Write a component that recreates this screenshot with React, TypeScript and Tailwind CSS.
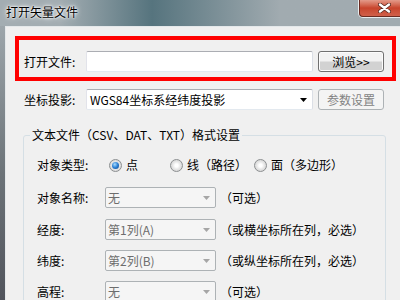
import React from 'react'

function Radio({ checked, label }: { checked?: boolean; label: string }) {
  return (
    <div className="flex items-center gap-[4px]">
      <span className="flex h-[13px] w-[13px] items-center justify-center rounded-full border border-[#8c8f91] bg-radial from-white from-20% via-[#e6e6e6] to-[#c9c9c9]">
        {checked && <span className="h-[7px] w-[7px] rounded-full bg-radial-[at_40%_35%] from-[#a8dcff] via-[#2a7fd4] to-[#0c3f7e]" />}
      </span>
      <span>{label}</span>
    </div>
  )
}

function Arrow({ color }: { color: string }) {
  return (
    <svg width="7" height="4" viewBox="0 0 7 4">
      <path d="M0 0h7L3.5 4z" fill={color} />
    </svg>
  )
}

function DisabledCombo({ value }: { value: string }) {
  return (
    <div className="flex h-[21px] w-[111px] items-center rounded-[2px] border border-[#adb2b5] bg-[#f5f5f5]">
      <span className="flex-1 pl-[2px] text-[#6d6d6d]">{value}</span>
      <span className="flex w-[17px] justify-center">
        <Arrow color="#a6a6a6" />
      </span>
    </div>
  )
}

function ComboRow({ label, value, hint }: { label: string; value: string; hint: string }) {
  return (
    <div className="flex h-[21px] items-center">
      <span className="w-[68px]">{label}</span>
      <DisabledCombo value={value} />
      <span className="ml-[4px]">{hint}</span>
    </div>
  )
}

export default function App() {
  return (
    <div className="flex h-[300px] w-[400px] flex-col overflow-hidden bg-[#8c989e] font-['Microsoft_YaHei','Noto_Sans_CJK_SC',sans-serif] text-[12px] leading-[16px] text-black">
      {/* aero title bar */}
      <div className="flex h-[26px] shrink-0 justify-between bg-linear-to-r from-[#a3adb2] from-15% via-[#56747e] via-38% to-[#a1abb0] to-70%">
        <div className="pl-[6px] pt-[4px] text-[12px] [text-shadow:0_0_6px_#ffffff,0_0_3px_#ffffff,0_0_2px_#ffffff]">
          打开矢量文件
        </div>
        <div className="flex h-[17px] w-[41px] items-center rounded-bl-[4px] border-b border-l border-[#6b2a20] bg-linear-to-b from-[#e39a8a] via-[#c8442c] to-[#d0604a] pl-[18px] ring-1 ring-[#e8ecee]">
          <svg width="13" height="10" viewBox="0 0 13 10">
            <path d="M2 1.5 11 8.5M11 1.5 2 8.5" stroke="#5b2a22" strokeWidth="4" strokeLinecap="round" />
            <path d="M2 1.5 11 8.5M11 1.5 2 8.5" stroke="#ffffff" strokeWidth="2.4" strokeLinecap="round" />
          </svg>
        </div>
      </div>

      <div className="flex flex-1">
        <div className="w-[5px] shrink-0 bg-linear-to-b from-[#9da6ab] via-[#6c7378] to-[#4c4f57]" />
        <div className="flex-1 border-l border-t border-[#e4e8ea] bg-[#f0f0f0]">
          <div className="ml-[9px] mt-[9px] h-[45px] w-[381px] border-4 border-[#ff0000] pl-[5px] pt-[11px]">
            <div className="flex h-[21px] items-center">
              <span className="w-[62px]">打开文件:</span>
              <div className="h-[21px] w-[227px] rounded-[2px] border border-[#abadb3] border-b-[#e3e9ef] border-l-[#e2e3ea] border-r-[#dbdfe6] bg-white" />
              <button className="ml-[5px] flex h-[21px] w-[66px] items-center justify-center rounded-[3px] border border-[#707070] bg-linear-to-b from-[#f2f2f2] from-45% to-[#d2d2d2] to-55% shadow-[inset_0_0_0_1px_#fcfcfc]">
                浏览&gt;&gt;
              </button>
            </div>
          </div>

          <div className="ml-[18px] mt-[8px] flex h-[21px] items-center">
            <span className="w-[62px]">坐标投影:</span>
            <div className="flex h-[21px] w-[227px] items-center rounded-[2px] border border-[#abadb3] border-b-[#e3e9ef] border-l-[#e2e3ea] border-r-[#dbdfe6] bg-white">
              <span className="flex-1 pl-[3px]">WGS84坐标系经纬度投影</span>
              <span className="flex w-[17px] justify-center">
                <Arrow color="#000000" />
              </span>
            </div>
            <button className="ml-[5px] flex h-[21px] w-[66px] items-center justify-center rounded-[3px] border border-[#adb2b5] bg-[#f4f4f4] text-[#838383]">
              参数设置
            </button>
          </div>

          <fieldset className="ml-[17px] mt-[17px] w-[363px] rounded-[3px] border border-[#d5dfe5] pb-[20px]">
            <legend className="ml-[6px] px-[2px] leading-[16px]">文本文件（CSV、DAT、TXT）格式设置</legend>
            <div className="pl-[13px] pt-[12px]">
              <div className="flex h-[20px] items-center">
                <span className="w-[72px]">对象类型:</span>
                <div className="w-[61px]">
                  <Radio checked label="点" />
                </div>
                <div className="w-[84px]">
                  <Radio label="线（路径）" />
                </div>
                <Radio label="面（多边形）" />
              </div>
              <div className="mt-[12px]">
                <ComboRow label="对象名称:" value="无" hint="（可选）" />
              </div>
              <div className="mt-[11px]">
                <ComboRow label="经度:" value="第1列(A)" hint="（或横坐标所在列，必选）" />
              </div>
              <div className="mt-[10px]">
                <ComboRow label="纬度:" value="第2列(B)" hint="（或纵坐标所在列，必选）" />
              </div>
              <div className="mt-[10px]">
                <ComboRow label="高程:" value="无" hint="（可选）" />
              </div>
            </div>
          </fieldset>
        </div>
      </div>
    </div>
  )
}
